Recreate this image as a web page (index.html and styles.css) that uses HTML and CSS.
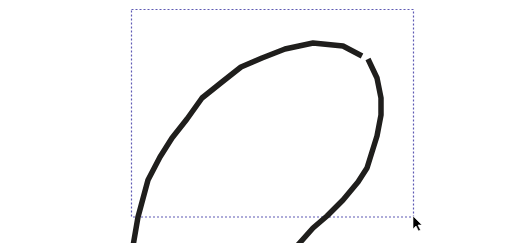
FILE: index.html
```html
<!DOCTYPE html>
<html>
<head>
<meta charset="utf-8">
<link rel="stylesheet" href="styles.css">
</head>
<body>
<div class="canvas">
<svg class="drawing" width="513" height="243" viewBox="0 0 513 243">
  <rect class="sel" x="131.5" y="9.5" width="282" height="207.5"/>
  <path class="stroke" d="M133 246 L138 217 L148 180 L160 157 L172 138 L187 119 L202 98 L222 82 L241 67 L262 58 L285 49 L313 43 L343 46 L362 56"/>
  <path class="stroke" d="M368 59 L377 78 L381 98 L381 115 L377 136 L372 152 L367 168 L358 182 L343 200 L327 216 L313 228 L297 246"/>
  <path class="cursor" d="M413 216 L413 229 L416 226 L418.5 231 L420.5 230 L418 225 L422 225 Z"/>
</svg>
</div>
</body>
</html>
```
FILE: styles.css
```css
html, body {
  margin: 0;
  padding: 0;
  background: #ffffff;
}
.canvas {
  width: 513px;
  height: 243px;
  overflow: hidden;
}
.drawing {
  display: block;
}
.sel {
  fill: none;
  stroke: #5e5ab4;
  stroke-width: 1.2;
  stroke-dasharray: 2 2;
}
.stroke {
  fill: none;
  stroke: #1f1e1c;
  stroke-width: 5.5;
  stroke-linejoin: round;
  stroke-linecap: butt;
}
.cursor {
  fill: #000;
  stroke: #fff;
  stroke-width: 0.6;
}
```
